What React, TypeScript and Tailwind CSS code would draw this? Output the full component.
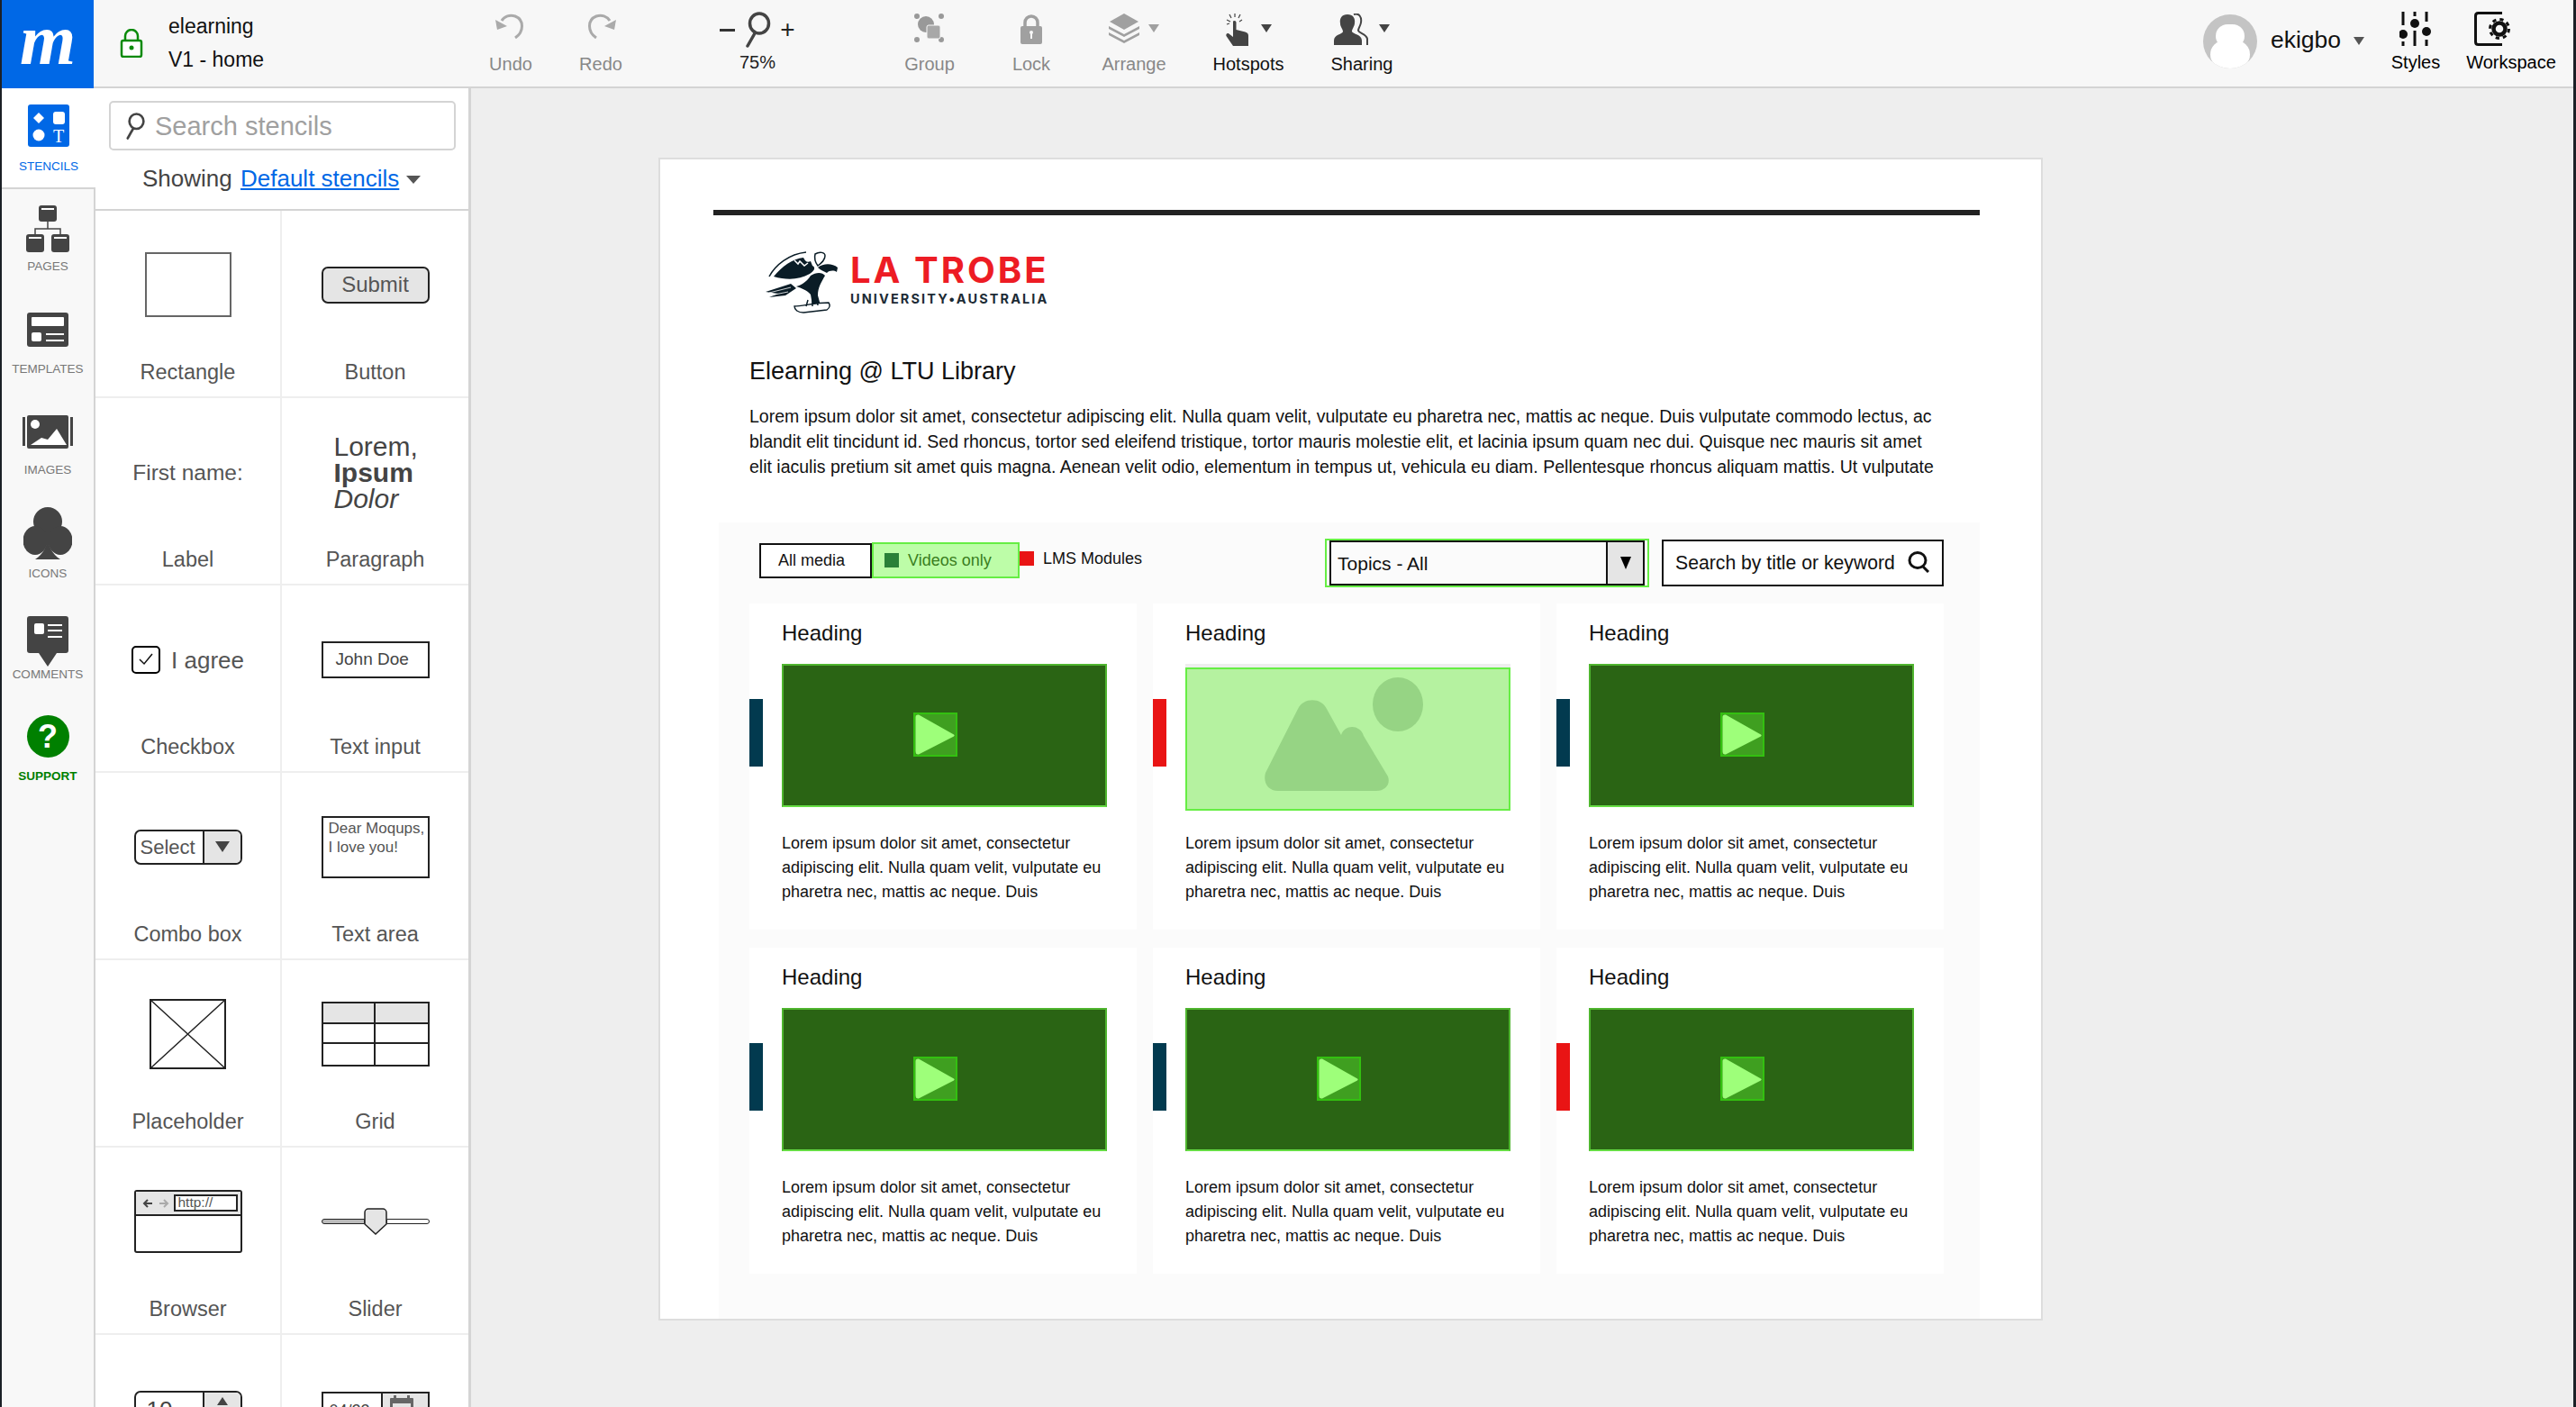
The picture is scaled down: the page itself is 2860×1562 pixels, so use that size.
import type { ReactNode } from "react"

const caret = "w-0 h-0 border-x-[6px] border-x-transparent border-t-[9px]"

function UndoIcon({ flip }: { flip?: boolean }) {
  return (
    <svg width="36" height="28" viewBox="0 0 36 28" className={flip ? "-scale-x-100" : ""}>
      <path d="M23 27C33 20 33 7 23 3 17 1 11 3 8 8" fill="none" stroke="#aaa" strokeWidth="3" />
      <path d="M1 7l13 7-11 4z" fill="#aaa" />
    </svg>
  )
}

function LensIcon() {
  return (
    <svg width="30" height="40" viewBox="0 0 30 40">
      <ellipse cx="17" cy="13" rx="10.5" ry="11" fill="none" stroke="#444" strokeWidth="3.5" />
      <path d="M12 24L4 38" stroke="#444" strokeWidth="3.5" strokeLinecap="round" />
    </svg>
  )
}

function GroupIcon() {
  return (
    <svg width="34" height="32" viewBox="0 0 34 32">
      <g fill="#999">
        <circle cx="3" cy="3" r="3" />
        <circle cx="30" cy="3" r="3" />
        <circle cx="3" cy="29" r="3" />
        <circle cx="30" cy="29" r="3" />
        <circle cx="13" cy="12" r="9" />
      </g>
      <rect x="14" y="13" width="15" height="15" rx="2" fill="#a8a8a8" stroke="#f7f7f7" />
    </svg>
  )
}

function PadlockIcon() {
  return (
    <svg width="24" height="34" viewBox="0 0 24 34">
      <path d="M5 15V10a7 7 0 0 1 14 0v5" fill="none" stroke="#a0a0a0" strokeWidth="3.5" />
      <rect x="0" y="14" width="24" height="20" rx="2" fill="#a0a0a0" />
      <rect x="11" y="21" width="2" height="7" fill="#f7f7f7" />
      <circle cx="12" cy="21" r="2" fill="#f7f7f7" />
    </svg>
  )
}

function ArrangeIcon() {
  return (
    <svg width="34" height="33" viewBox="0 0 34 33" fill="#a0a0a0">
      <path d="M17 0l16 9-16 9L1 9z" />
      <path d="M0 14l17 9 17-9v3L17 26 0 17z" />
      <path d="M0 21l17 9 17-9v3L17 33 0 24z" />
    </svg>
  )
}

function HandIcon() {
  return (
    <svg width="30" height="37" viewBox="0 0 30 37">
      <g stroke="#444" strokeWidth="1.2">
        <path d="M2 7l4 2M5 1l2 4M11 0v4M17 1l-2 4M19 7l-3 2M2 12l3-1" />
      </g>
      <path
        d="M9 8.500c1.500-1.200 3.500-.5 3.500 1.500v8l10 2.500c2.500.7 3.500 2 3.500 4V36H9L1.500 25c-.8-1.500.7-4 3-2.500L9 26z"
        fill="#444"
      />
    </svg>
  )
}

function SharingIcon() {
  return (
    <svg width="40" height="36" viewBox="0 0 40 36">
      <path
        d="M22 1c6-2 9 3 8 9-.5 4-3 6-3 9 1 3 9 4 10 9v7"
        fill="none"
        stroke="#444"
        strokeWidth="2"
      />
      <path
        d="M15 1c6 0 9 4 8 10-.5 4-3 6-3 9 1 3 11 3 11 10v5H0v-5c0-7 10-7 10-10 0-3-3-5-3-9C6 5 9 1 15 1z"
        fill="#444"
      />
    </svg>
  )
}

function StylesIcon() {
  return (
    <svg width="36" height="38" viewBox="0 0 36 38" stroke="#111" strokeWidth="3" fill="#111">
      <path d="M4 0v15M4 33v5M17 0v5M17 21v17M30 0v11M30 31v7" />
      <circle cx="4" cy="25" r="5" stroke="none" />
      <circle cx="17" cy="13" r="5" stroke="none" />
      <circle cx="30" cy="22" r="5" stroke="none" />
    </svg>
  )
}

function WorkspaceIcon() {
  return (
    <svg width="42" height="38" viewBox="0 0 42 38">
      <path d="M31 1.500H4.500Q1.500 1.500 1.500 4.500V33.500Q1.500 36.500 4.500 36.500H31" fill="none" stroke="#111" strokeWidth="3" />
      <circle cx="28" cy="19" r="6.500" fill="none" stroke="#111" strokeWidth="4.500" />
      <circle cx="28" cy="19" r="10.500" fill="none" stroke="#111" strokeWidth="3" strokeDasharray="4.200 4.050" />
    </svg>
  )
}

function ToolItem({
  label,
  width,
  dark,
  icon,
  arrow,
}: {
  label: string
  width: string
  dark?: boolean
  icon: ReactNode
  arrow?: boolean
}) {
  return (
    <div className={`${width} flex flex-col items-center shrink-0`}>
      <div className="h-[55px] pt-[15px] flex items-start gap-[10px]">
        {icon}
        {arrow && (
          <div className={`${caret} mt-[12px] ${dark ? "border-t-[#444]" : "border-t-[#a0a0a0]"}`} />
        )}
      </div>
      <span className={`text-[20px] leading-[30px] mt-[1px] ${dark ? "text-[#111]" : "text-[#888]"}`}>{label}</span>
    </div>
  )
}

function TopBar() {
  return (
    <header className="h-[98px] shrink-0 flex bg-[#f7f7f7] border-b-2 border-[#d4d4d4]">
      <div className="w-[102px] h-[98px] shrink-0 bg-[#0068e6] flex items-center justify-center">
        <span className="[font-family:'Liberation_Serif',serif] italic font-bold text-white text-[80px] leading-none -mt-[10px]">
          m
        </span>
      </div>
      <div className="w-[413px] shrink-0 flex items-center pl-[29px]">
        <svg width="26" height="32" viewBox="0 0 26 32">
          <path d="M6 13V8a7 7 0 0 1 14 0v5" fill="none" stroke="#0a8a0a" strokeWidth="2.500" />
          <rect x="2" y="13" width="22" height="18" rx="2" fill="#fff" stroke="#0a8a0a" strokeWidth="2.500" />
          <circle cx="13" cy="21" r="2.500" fill="#0a8a0a" />
        </svg>
        <div className="ml-[28px] text-[23px] text-[#111] leading-[37px] -mt-[1px]">
          <div>elearning</div>
          <div>V1 - home</div>
        </div>
      </div>
      <ToolItem label="Undo" width="w-[100px]" icon={<UndoIcon />} />
      <ToolItem label="Redo" width="w-[100px]" icon={<UndoIcon flip />} />
      <div className="w-[120px] ml-[64px] shrink-0 flex flex-col items-center text-[#222]">
        <div className="h-[55px] pt-[13px] flex items-start gap-[10px]">
          <span className="w-[17px] h-[3px] bg-[#333] mt-[19px]" />
          <LensIcon />
          <span className="text-[28px] leading-[40px] font-light">+</span>
        </div>
        <span className="text-[20px] leading-[26px] mt-[1px]">75%</span>
      </div>
      <div className="w-[81px] shrink-0" />
      <ToolItem label="Group" width="w-[100px]" icon={<GroupIcon />} />
      <div className="w-[13px] shrink-0" />
      <ToolItem label="Lock" width="w-[100px]" icon={<PadlockIcon />} />
      <div className="w-[14px] shrink-0" />
      <ToolItem label="Arrange" width="w-[100px]" icon={<ArrangeIcon />} arrow />
      <div className="w-[17px] shrink-0" />
      <ToolItem label="Hotspots" width="w-[120px]" dark icon={<HandIcon />} arrow />
      <div className="w-[11px] shrink-0" />
      <ToolItem label="Sharing" width="w-[110px]" dark icon={<SharingIcon />} arrow />
      <div className="ml-auto flex pr-[14px]">
        <div className="flex items-start pt-[16px]">
          <div className="w-[60px] h-[60px] rounded-full bg-[#c4c4c4] overflow-hidden flex flex-col items-center shrink-0">
            <div className="w-[32px] h-[34px] rounded-full bg-white mt-[11px]" />
            <div className="w-[44px] h-[40px] rounded-full bg-white -mt-[8px]" />
          </div>
          <span className="ml-[15px] text-[26.500px] leading-[56px] text-[#111]">ekigbo</span>
          <div className={`${caret} ml-[14px] mt-[25px] border-t-[#555]`} />
        </div>
        <div className="w-[100px] ml-[7px] flex flex-col items-center">
          <div className="h-[51px] pt-[13px]">
            <StylesIcon />
          </div>
          <span className="text-[20px] leading-[36px]">Styles</span>
        </div>
        <div className="w-[110px] ml-[1px] flex flex-col items-center">
          <div className="h-[51px] pt-[13px] pl-[10px] self-start ml-[4px]">
            <WorkspaceIcon />
          </div>
          <span className="text-[20px] leading-[36px]">Workspace</span>
        </div>
      </div>
    </header>
  )
}

function RailItem({
  label,
  className,
  labelClass,
  children,
}: {
  label: string
  className: string
  labelClass?: string
  children: ReactNode
}) {
  return (
    <div className={`flex flex-col items-center ${className}`}>
      {children}
      <span className={`text-[13.5px] leading-[18px] ${labelClass ?? "text-[#777]"}`}>{label}</span>
    </div>
  )
}

function Rail() {
  return (
    <aside className="w-[104px] shrink-0 flex flex-col">
      <RailItem label="STENCILS" className="h-[110px] pt-[18px] gap-[13px] bg-white" labelClass="text-[#0068e6]">
        <svg width="46" height="47" viewBox="0 0 46 47">
          <rect width="46" height="47" rx="3" fill="#0068e6" />
          <path d="M12 9l6 6-6 6-6-6z" fill="#fff" />
          <rect x="28" y="8" width="13" height="14" rx="3" fill="#fff" />
          <circle cx="12" cy="34" r="6.500" fill="#fff" />
          <text x="34" y="42" textAnchor="middle" fill="#fff" fontSize="20" fontFamily="Liberation Serif">
            T
          </text>
        </svg>
      </RailItem>
      <div className="flex-1 flex flex-col bg-[#f8f8f8] border-r-2 border-t-2 border-[#d4d4d4]">
        <RailItem label="PAGES" className="h-[124px] pt-[18px] gap-[7px]">
          <svg width="48" height="52" viewBox="0 0 48 52">
            <g fill="#444">
              <rect x="14" y="0" width="20" height="18" rx="3" />
              <rect x="0" y="32" width="20" height="20" rx="3" />
              <rect x="28" y="32" width="20" height="20" rx="3" />
            </g>
            <path d="M24 18v8M10 32v-6h28v6" fill="none" stroke="#444" strokeWidth="1.500" />
            <g fill="#fff">
              <rect x="17" y="3" width="14" height="2" />
              <rect x="3" y="35" width="14" height="2" />
              <rect x="31" y="35" width="14" height="2" />
            </g>
          </svg>
        </RailItem>
        <RailItem label="TEMPLATES" className="h-[112px] pt-[13px] gap-[16px]">
          <svg width="46" height="38" viewBox="0 0 46 38">
            <rect width="46" height="38" rx="3" fill="#444" />
            <g fill="#fff">
              <rect x="5" y="5" width="36" height="10" rx="1" />
              <rect x="5" y="22" width="11" height="10" rx="2" />
              <rect x="21" y="23" width="20" height="2" />
              <rect x="21" y="30" width="20" height="2" />
            </g>
          </svg>
        </RailItem>
        <RailItem label="IMAGES" className="h-[113px] pt-[15px] gap-[15px]">
          <svg width="56" height="37" viewBox="0 0 56 37">
            <rect x="0" y="2" width="3" height="32" fill="#444" />
            <rect x="53" y="2" width="3" height="32" fill="#444" />
            <rect x="5" y="0" width="46" height="37" rx="2" fill="#444" />
            <ellipse cx="14" cy="10" rx="5" ry="5" fill="#fff" />
            <path d="M9 33l12-8 7 2 10-12 11 18z" fill="#fff" />
          </svg>
        </RailItem>
        <RailItem label="ICONS" className="h-[112px] pt-[4px] gap-[7px]">
          <svg width="54" height="58" viewBox="0 0 54 58" fill="#444">
            <circle cx="27" cy="16" r="16" />
            <ellipse cx="13" cy="37" rx="13.500" ry="16" />
            <ellipse cx="41" cy="37" rx="13.500" ry="16" />
            <path d="M27 28c0 16-5 24-14 30h28c-9-6-14-14-14-30z" />
            <rect x="20" y="28" width="14" height="14" />
          </svg>
        </RailItem>
        <RailItem label="COMMENTS" className="h-[112px] pt-[13px] gap-[0px]">
          <svg width="46" height="56" viewBox="0 0 46 56">
            <path d="M3 0h40a3 3 0 0 1 3 3v35a3 3 0 0 1-3 3H33l-10 15-10-15H3a3 3 0 0 1-3-3V3a3 3 0 0 1 3-3z" fill="#444" />
            <g fill="#fff">
              <rect x="8" y="8" width="11" height="12" rx="2" />
              <rect x="23" y="9" width="16" height="2" />
              <rect x="23" y="15" width="16" height="2" />
              <rect x="23" y="22" width="16" height="2" />
            </g>
          </svg>
        </RailItem>
        <RailItem label="SUPPORT" className="pt-[11px] gap-[12px]" labelClass="text-[#008000] font-bold">
          <div className="w-[47px] h-[47px] rounded-full bg-[#008000] flex items-center justify-center text-white font-bold text-[36px] leading-none">
            ?
          </div>
        </RailItem>
      </div>
    </aside>
  )
}

function Stencil({ label, children }: { label?: string; children: ReactNode }) {
  return (
    <div className="h-[208px] overflow-hidden flex flex-col items-center border-b-2 border-[#eeeeee] odd:border-r-2">
      <div className="h-[164px] shrink-0 w-full flex items-center justify-center text-[#555]">{children}</div>
      {label && <span className="text-[23.500px] leading-[30px] text-[#555]">{label}</span>}
    </div>
  )
}

function StencilPanel() {
  return (
    <aside className="w-[417px] shrink-0 bg-white border-r-[3px] border-[#d4d4d4] flex flex-col">
      <div className="h-[136px] shrink-0 border-b-2 border-[#d4d4d4] px-[15px] pt-[14px]">
        <div className="w-[385px] h-[55px] border-2 border-[#d4d4d4] rounded-[5px] flex items-center pl-[15px]">
          <svg width="24" height="30" viewBox="0 0 30 40">
            <ellipse cx="17" cy="13" rx="10.500" ry="11" fill="none" stroke="#444" strokeWidth="3.500" />
            <path d="M12 24L4 38" stroke="#444" strokeWidth="3.500" strokeLinecap="round" />
          </svg>
          <span className="ml-[10px] mt-[3px] text-[29px] text-[#a0a0a0]">Search stencils</span>
        </div>
        <div className="mt-[13px] pl-[37px] flex items-center text-[26px] leading-[36px] text-[#444]">
          <span>Showing&nbsp;</span>
          <span className="text-[#0068e6] underline underline-offset-2 ml-[2px]">Default stencils</span>
          <div className="w-0 h-0 border-x-[8px] border-x-transparent border-t-[9px] border-t-[#555] ml-[8px] mt-[2px]" />
        </div>
      </div>
      <div className="grid grid-cols-2">
        <Stencil label="Rectangle">
          <div className="w-[96px] h-[72px] border-2 border-[#666]" />
        </Stencil>
        <Stencil label="Button">
          <div className="w-[120px] h-[41px] rounded-[7px] border-2 border-[#222] bg-[#e5e5e5] flex items-center justify-center text-[24px] text-[#555]">
            Submit
          </div>
        </Stencil>
        <Stencil label="Label">
          <span className="text-[24.500px] mt-[2px]">First name:</span>
        </Stencil>
        <Stencil label="Paragraph">
          <div className="w-[120px] pl-[14px] text-[30px] leading-[29px] text-[#444]">
            <div>Lorem,</div>
            <div className="font-bold">Ipsum</div>
            <div className="italic">Dolor</div>
          </div>
        </Stencil>
        <Stencil label="Checkbox">
          <div className="flex items-center gap-[12px]">
            <div className="w-[32px] h-[31px] rounded-[5px] border-[2.500px] border-black flex items-center justify-center">
              <svg width="18" height="14" viewBox="0 0 18 14">
                <path d="M2 7l5 5L16 1" fill="none" stroke="#111" strokeWidth="1.500" />
              </svg>
            </div>
            <span className="text-[26px] mt-[2px]">I agree</span>
          </div>
        </Stencil>
        <Stencil label="Text input">
          <div className="w-[120px] h-[41px] border-2 border-[#222] pl-[14px] flex items-center text-[19px] text-[#444]">
            John Doe
          </div>
        </Stencil>
        <Stencil label="Combo box">
          <div className="w-[120px] h-[39px] rounded-[7px] border-2 border-[#222] flex overflow-hidden">
            <div className="w-[76px] border-r-2 border-[#222] pl-[5px] text-[22px] leading-[35px]">Select</div>
            <div className="flex-1 bg-[#e5e5e5] flex items-center justify-center">
              <div className="w-0 h-0 border-x-[8px] border-x-transparent border-t-[12px] border-t-[#444]" />
            </div>
          </div>
        </Stencil>
        <Stencil label="Text area">
          <div className="w-[120px] h-[69px] border-2 border-[#222] pl-[6px] pt-[1px] text-[17px] leading-[21px] text-[#555]">
            <div className="whitespace-nowrap">Dear Moqups,</div>
            <div>I love you!</div>
          </div>
        </Stencil>
        <Stencil label="Placeholder">
          <svg width="85" height="78" viewBox="0 0 85 78">
            <rect x="1" y="1" width="83" height="76" fill="#fff" stroke="#222" strokeWidth="2" />
            <path d="M1 1l83 76M84 1L1 77" stroke="#222" strokeWidth="1.500" />
          </svg>
        </Stencil>
        <Stencil label="Grid">
          <div className="w-[120px] h-[72px] border-2 border-[#222] grid grid-cols-2 grid-rows-3">
            <div className="bg-[#e5e5e5] border-r-2 border-b-2 border-[#222]" />
            <div className="bg-[#e5e5e5] border-b-2 border-[#222]" />
            <div className="border-r-2 border-b-2 border-[#222]" />
            <div className="border-b-2 border-[#222]" />
            <div className="border-r-2 border-[#222]" />
            <div />
          </div>
        </Stencil>
        <Stencil label="Browser">
          <div className="w-[120px] h-[70px] rounded-[3px] border-2 border-[#222] flex flex-col">
            <div className="h-[27px] bg-[#e5e5e5] border-b-2 border-[#222] flex items-center pl-[7px]">
              <svg width="31" height="12" viewBox="0 0 31 12" fill="none" strokeWidth="2">
                <path d="M11 6H2M6 2L2 6l4 4" stroke="#444" />
                <path d="M19 6h9M24 2l4 4-4 4" stroke="#aaa" />
              </svg>
              <div className="ml-[4px] w-[71px] h-[19px] bg-white border-2 border-[#222] text-[15.500px] leading-[14px] pl-[3px] text-[#555]">
                http://
              </div>
            </div>
          </div>
        </Stencil>
        <Stencil label="Slider">
          <div className="w-[120px] h-[30px] flex items-center">
            <div className="w-[48px] h-[6px] rounded-l-full bg-[#bbb] border border-[#222]" />
            <svg width="26" height="30" viewBox="0 0 26 30" className="-mx-[1px] shrink-0">
              <path d="M5 1h16a4 4 0 0 1 4 4v13L13 29 1 18V5a4 4 0 0 1 4-4z" fill="#e5e5e5" stroke="#222" strokeWidth="1.500" />
            </svg>
            <div className="flex-1 h-[6px] rounded-r-full bg-white border border-[#222]" />
          </div>
        </Stencil>
        <Stencil>
          <div className="w-[120px] h-[39px] -mt-[1px] rounded-[7px] border-2 border-[#222] flex overflow-hidden">
            <div className="w-[76px] border-r-2 border-[#222] pl-[12px] pt-[2px] text-[26px] leading-[35px] text-[#444]">
              10<span className="text-[17px]">px</span>
            </div>
            <div className="flex-1 bg-[#e5e5e5] flex justify-center pt-[5px]">
              <div className="w-0 h-0 border-x-[6px] border-x-transparent border-b-[9px] border-b-[#444]" />
            </div>
          </div>
        </Stencil>
        <Stencil>
          <div className="w-[120px] h-[39px] mt-[1px] border-2 border-[#222] flex overflow-hidden">
            <div className="w-[66px] border-r-2 border-[#222] pl-[7px] pt-[4px] text-[18px] leading-[30px] text-[#444]">04/23</div>
            <div className="flex-1 bg-[#e5e5e5] pl-[8px] pt-[2px]">
              <svg width="26" height="24" viewBox="0 0 26 24" fill="#666">
                <rect x="0" y="3" width="26" height="21" rx="1" />
                <rect x="4" y="0" width="3" height="6" />
                <rect x="19" y="0" width="3" height="6" />
                <rect x="3" y="9" width="20" height="12" fill="#e5e5e5" />
              </svg>
            </div>
          </div>
        </Stencil>
      </div>
    </aside>
  )
}

function LaTrobeLogo() {
  return (
    <div className="flex items-start h-[100px]">
      <svg width="104" height="100" viewBox="0 0 104 100" className="shrink-0">
        <g fill="#0a1c26">
          {/* wing */}
          <path d="M19 37C28 26 40 17 52 16c2 4 4 6 8 4l2 5c4 2 2 6-3 9-12 7-26 7-40 3z" />
          {/* body and legs */}
          <path d="M60 36c6-4 13-4 16 0-4 7-8 13-8 22l3 11h-9l-2-12c-4-5-10-7-16-9 7-2 12-6 16-12z" />
          {/* head */}
          <path d="M68 27c6-5 16-5 22 0l-1 5c-3-2-8-2-11 1-3-2-7-3-10-6z" />
          {/* tail */}
          <path d="M10 54l28-9 6 5-12 8-18 2 10-4z" />
        </g>
        <path d="M14 37C21 24 36 12 55 10" fill="none" stroke="#0a1c26" strokeWidth="1.500" />
        <path d="M65 12c5-3 11-2 11 2 0 5-4 8-8 11-3-4-4-9-3-13z" fill="none" stroke="#0a1c26" strokeWidth="1.500" />
        <path d="M14 55l24-6M15 58l20-4" stroke="#fff" strokeWidth="0.800" />
        <path d="M42 19l4 4 2-3 5 5 4-3" fill="none" stroke="#fff" strokeWidth="1.500" />
        <path
          d="M42 70c8 0 24-4 38-4 2 3 1 6-2 8l-26 3c-6 0-10-3-10-7z"
          fill="#fff"
          stroke="#0a1c26"
          strokeWidth="1.400"
        />
        <path d="M57 63l-2 7M62 63v7M67 63l1 6" stroke="#0a1c26" strokeWidth="1.500" />
      </svg>
      <div className="[font-family:Inter,sans-serif] font-bold whitespace-nowrap">
        <div className="text-[40px] leading-[32px] mt-[14px] tracking-[3px] text-[#ed1c24]">LA TROBE</div>
        <div className="text-[14.500px] leading-[16px] mt-[8px] tracking-[2.100px] text-[#1c2b35]">UNIVERSITY•AUSTRALIA</div>
      </div>
    </div>
  )
}

function PlayThumb() {
  return (
    <div className="w-[361px] h-[159px] shrink-0 bg-[#2a6414] border-2 border-t-[#4fb52f] border-x-[#4fb52f] border-b-[#66dd44] flex items-center justify-center">
      <div className="w-[49px] h-[49px] mr-[20px] -mt-[3px] bg-[#3f9f20] border-2 border-[#33c010]">
        <svg width="45" height="45" viewBox="0 0 45 45">
          <path d="M4 0.500L43 22.500 Q44.500 23 43 24.500 L4 44.500 Q0.500 45 0.500 41 V3 Q0.500 0 4 0.500z" fill="#9eff7a" />
        </svg>
      </div>
    </div>
  )
}

function ImageThumb() {
  return (
    <div className="w-[361px] h-[163px] -mb-[4px] shrink-0 border-t-[4px] border-[#eeeeee]">
      <div className="h-[159px] bg-[#b5f2a0] border-2 border-[#66ee44]">
        <svg width="357" height="155" viewBox="2 2 357 155">
          <ellipse cx="236" cy="41" rx="28" ry="30" fill="#96d484" />
          <path
            d="M103 137C92 137 86 128 89 117L125 46C131 33 151 33 157 46L173 75C177 63 194 63 198 76L225 121C228 130 222 137 212 137Z"
            fill="#96d484"
          />
        </svg>
      </div>
    </div>
  )
}

type CardData = { stripe: string; image?: boolean }

const cards: CardData[] = [
  { stripe: "bg-[#023a4f]" },
  { stripe: "bg-[#e91414]", image: true },
  { stripe: "bg-[#023a4f]" },
  { stripe: "bg-[#023a4f]" },
  { stripe: "bg-[#023a4f]" },
  { stripe: "bg-[#e91414]" },
]

function MediaCard({ stripe, image }: CardData) {
  return (
    <article className="h-[362px] bg-white flex">
      <div className={`w-[15px] h-[75px] mt-[106px] shrink-0 ${stripe}`} />
      <div className="pl-[21px] pt-[13px]">
        <h3 className="text-[24px] leading-[40px] text-[#111]">Heading</h3>
        <div className="mt-[14px]">{image ? <ImageThumb /> : <PlayThumb />}</div>
        <p className="mt-[27px] text-[18px] leading-[27px] text-[#111] whitespace-nowrap">
          Lorem ipsum dolor sit amet, consectetur
          <br />
          adipiscing elit. Nulla quam velit, vulputate eu
          <br />
          pharetra nec, mattis ac neque. Duis
        </p>
      </div>
    </article>
  )
}

function FilterBar() {
  return (
    <div className="h-[90px] flex items-start pl-[45px] pt-[18px] text-[#111]">
      <div className="mt-[5px] w-[125px] h-[39px] bg-white border-2 border-[#111] flex items-center pl-[19px] text-[18px]">
        All media
      </div>
      <div className="mt-[4px] w-[164px] h-[40px] bg-[#bdfda8] border-2 border-[#66ee44] flex items-center pl-[12px] text-[18px] text-[#3a7d20]">
        <span className="w-[16px] h-[16px] bg-[#2a8038]" />
        <span className="ml-[10px]">Videos only</span>
      </div>
      <span className="mt-[14px] w-[16px] h-[16px] bg-[#e91414]" />
      <span className="mt-[10px] ml-[10px] text-[18px] leading-[24px]">LMS Modules</span>
      <div className="ml-[203px] w-[360px] h-[54px] border-2 border-[#66ee44] px-[3px] shrink-0">
        <div className="h-full border-2 border-[#111] flex">
          <span className="flex-1 pl-[7px] text-[21px] leading-[48px]">Topics - All</span>
          <div className="w-[41px] bg-[#e5e5e5] border-l-2 border-[#111] flex items-center justify-center">
            <div className="w-0 h-0 border-x-[6px] border-x-transparent border-t-[14px] border-t-black" />
          </div>
        </div>
      </div>
      <div className="ml-[14px] mt-[1px] w-[313px] h-[52px] bg-white border-2 border-[#111] flex items-center pl-[13px] shrink-0">
        <span className="text-[21.200px] -mt-[1px] whitespace-nowrap">Search by title or keyword</span>
        <svg width="25" height="24" viewBox="0 0 25 24" className="ml-[14px] -mt-[3px]">
          <ellipse cx="11" cy="10" rx="9" ry="8.500" fill="none" stroke="#111" strokeWidth="3" />
          <path d="M16 16l7 7" stroke="#111" strokeWidth="3" />
        </svg>
      </div>
    </div>
  )
}

function MockPage() {
  return (
    <section className="w-[1537px] h-[1291px] ml-[208px] mt-[77px] bg-white border-2 border-[#dddddd] overflow-hidden shrink-0">
      <div className="ml-[59px] mt-[56px] w-[1406px] h-[6px] bg-[#222]" />
      <div className="ml-[107px] mt-[31px]">
        <LaTrobeLogo />
      </div>
      <div className="ml-[99px] w-[1360px]">
        <h1 className="text-[27px] leading-[36px] mt-[24px] text-[#111]">Elearning @ LTU Library</h1>
        <p className="mt-[18px] text-[19.500px] leading-[28px] text-[#111] whitespace-nowrap">
          Lorem ipsum dolor sit amet, consectetur adipiscing elit. Nulla quam velit, vulputate eu pharetra nec, mattis ac neque. Duis vulputate commodo lectus, ac
          <br />
          blandit elit tincidunt id. Sed rhoncus, tortor sed eleifend tristique, tortor mauris molestie elit, et lacinia ipsum quam nec dui. Quisque nec mauris sit amet
          <br />
          elit iaculis pretium sit amet quis magna. Aenean velit odio, elementum in tempus ut, vehicula eu diam. Pellentesque rhoncus aliquam mattis. Ut vulputate
        </p>
      </div>
      <div className="ml-[65px] mt-[48px] w-[1400px] h-[900px] bg-[#fbfbfb]">
        <FilterBar />
        <div className="ml-[34px] w-[1326px] grid grid-cols-3 gap-x-[18px] gap-y-[20px]">
          {cards.map((card, i) => (
            <MediaCard key={i} {...card} />
          ))}
        </div>
      </div>
    </section>
  )
}

export default function App() {
  return (
    <div className="w-[2860px] h-[1562px] overflow-hidden flex flex-col bg-[#eeeeee] border-l-2 border-r-[3px] border-[#1b2026] [font-family:'Liberation_Sans',sans-serif]">
      <TopBar />
      <div className="flex-1 min-h-0 flex">
        <Rail />
        <StencilPanel />
        <MockPage />
      </div>
    </div>
  )
}
